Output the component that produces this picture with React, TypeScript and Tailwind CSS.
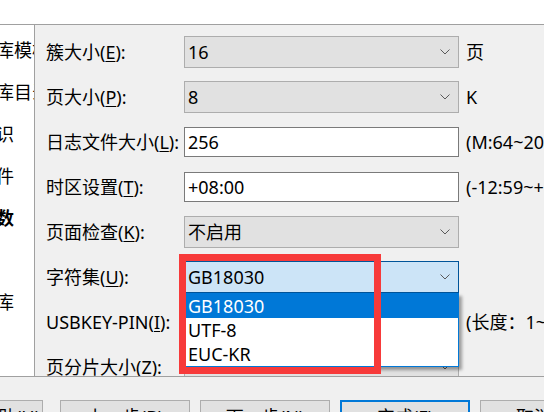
import React from "react";

const Chevron = () => (
  <svg width="10" height="6" viewBox="0 0 10 6" className="shrink-0">
    <path d="M0.5 0.5 L5 5 L9.5 0.5" stroke="#5a5a5a" strokeWidth="1" fill="none" />
  </svg>
);

const Combo = ({ value, focused }: { value: string; focused?: boolean }) => (
  <div
    className={
      focused
        ? "h-[32px] w-[275px] border border-[#005499] bg-[#cce4f7] flex items-center justify-between pl-[3px] pr-[8px]"
        : "h-[32px] w-[275px] border border-[#adadad] bg-[#e1e1e1] flex items-center justify-between pl-[3px] pr-[8px]"
    }
  >
    <span className="leading-none whitespace-nowrap">{value}</span>
    <Chevron />
  </div>
);

const TextBox = ({ value }: { value: string }) => (
  <div className="h-[30px] w-[275px] border border-[#7a7a7a] bg-white flex items-center pl-[3px]">
    <span className="leading-none whitespace-nowrap">{value}</span>
  </div>
);

const Label = ({ pre, k, post = "):" }: { pre: string; k: string; post?: string }) => (
  <div className="whitespace-nowrap leading-none">
    {pre}
    <u className="underline-offset-2">{k}</u>
    {post}
  </div>
);

const Unit = ({ children }: { children?: React.ReactNode }) => (
  <div className="pl-[7px] whitespace-nowrap leading-none">{children}</div>
);

export default function App() {
  const steps = [
    { t: "创建数据库模板", b: false },
    { t: "指定数据库目录", b: false },
    { t: "数据库标识", b: false },
    { t: "数据库文件", b: false },
    { t: "初始化参数", b: true },
    { t: "口令管理", b: false },
    { t: "创建示例库", b: false },
    { t: "创建摘要", b: false },
  ];

  return (
    <div className="w-[544px] h-[412px] overflow-hidden bg-[#f0f0f0] text-black text-[18px] font-['Noto_Sans','Noto_Sans_CJK_SC',sans-serif]">
      <div className="h-[25px] bg-white border-b border-[#a0a0a0]" />
      <div className="h-[352px] flex border-b border-[#a0a0a0]">
        <div className="w-[35px] shrink-0 bg-white border-r border-[#a0a0a0] overflow-hidden pt-[4px]">
          {steps.map((s) => (
            <div
              key={s.t}
              className={
                s.b
                  ? "h-[42px] flex items-center ml-[-76px] whitespace-nowrap font-bold leading-none"
                  : "h-[42px] flex items-center ml-[-76px] whitespace-nowrap leading-none"
              }
            >
              {s.t}
            </div>
          ))}
        </div>
        <div className="relative flex-1 overflow-hidden pl-[11px] pt-[4px]">
          <div className="grid grid-cols-[138px_275px_max-content] auto-rows-[45px] items-center">
            <Label pre="簇大小(" k="E" />
            <Combo value="16" />
            <Unit>页</Unit>

            <Label pre="页大小(" k="P" />
            <Combo value="8" />
            <Unit>K</Unit>

            <Label pre="日志文件大小(" k="L" />
            <TextBox value="256" />
            <Unit>(M:64~2048)</Unit>

            <Label pre="时区设置(" k="T" />
            <TextBox value="+08:00" />
            <Unit>(-12:59~+14:00)</Unit>

            <Label pre="页面检查(" k="K" />
            <Combo value="不启用" />
            <Unit />

            <Label pre="字符集(" k="U" />
            <div className="relative">
              <Combo value="GB18030" focused />
              <div className="absolute left-0 top-full w-[275px] border border-[#0078d7] bg-white shadow-[3px_3px_3px_rgba(0,0,0,0.35)] z-10">
                <div className="h-[24px] flex items-center pl-[3px] bg-[#0078d7] text-white leading-none">GB18030</div>
                <div className="h-[24px] flex items-center pl-[3px] leading-none">UTF-8</div>
                <div className="h-[24px] flex items-center pl-[3px] leading-none">EUC-KR</div>
              </div>
            </div>
            <Unit />

            <Label pre="USBKEY-PIN(" k="I" />
            <TextBox value="" />
            <Unit>(长度：1~48)</Unit>

            <Label pre="页分片大小(" k="Z" />
            <Combo value="8192" />
            <Unit />
          </div>
          <div className="absolute left-[144px] top-[229px] w-[202px] h-[120px] border-[7px] border-[#f73a3a] z-20" />
        </div>
      </div>
      <div className="pt-[23px] flex whitespace-nowrap">
        <div className="ml-[-23px] mr-[17px] w-[66px] h-[34px] shrink-0 border border-[#adadad] bg-[#e1e1e1] flex items-center justify-center leading-none">
          帮助(<u>H</u>)
        </div>
        <div className="mr-[10px] w-[130px] h-[34px] shrink-0 border border-[#adadad] bg-[#e1e1e1] flex items-center justify-center leading-none">
          上一步(<u>B</u>)
        </div>
        <div className="mr-[10px] w-[130px] h-[34px] shrink-0 border border-[#adadad] bg-[#e1e1e1] flex items-center justify-center leading-none">
          下一步(<u>N</u>)
        </div>
        <div className="mr-[10px] w-[130px] h-[34px] shrink-0 border-2 border-[#0078d7] bg-[#e1e1e1] flex items-center justify-center leading-none">
          完成(<u>F</u>)
        </div>
        <div className="w-[130px] h-[34px] shrink-0 border border-[#adadad] bg-[#e1e1e1] flex items-center justify-center leading-none">
          取消(<u>C</u>)
        </div>
      </div>
    </div>
  );
}
